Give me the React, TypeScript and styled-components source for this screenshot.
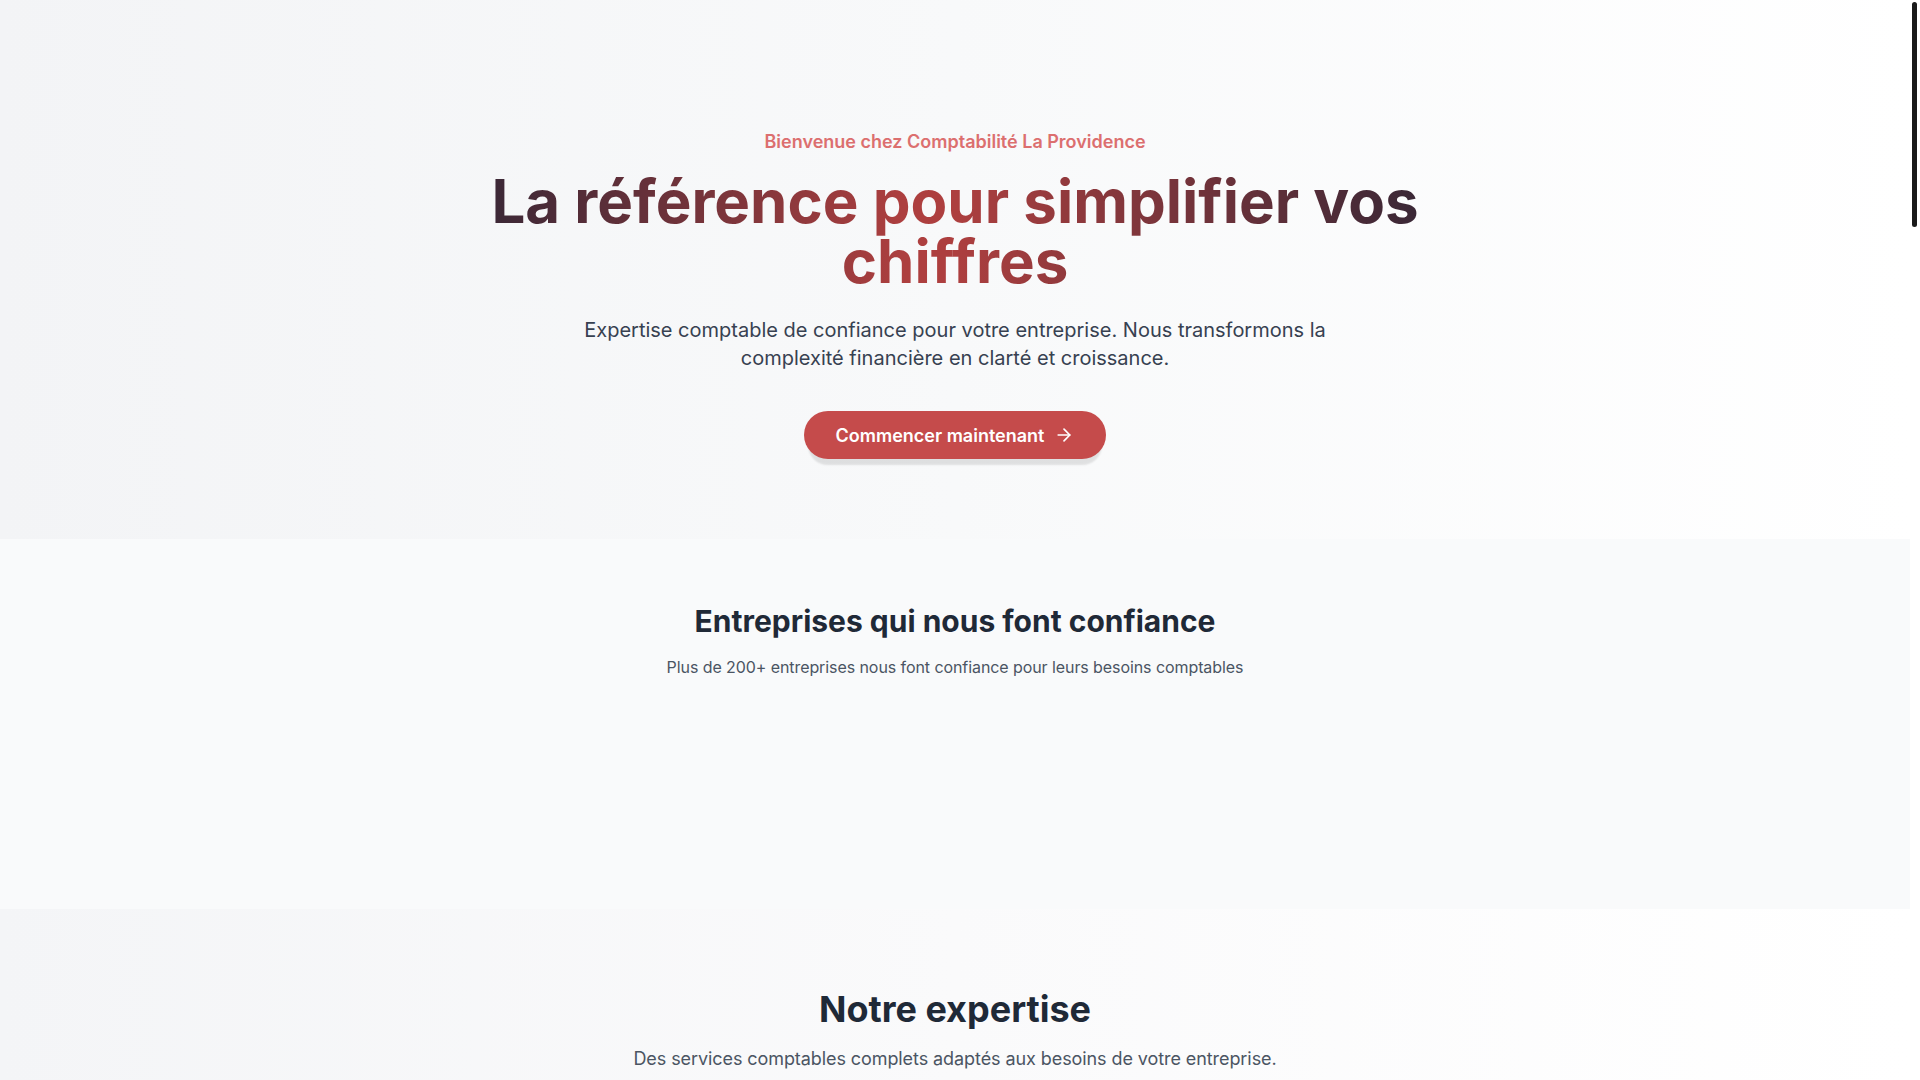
import React from 'react'
import styled, { createGlobalStyle } from 'styled-components'
import { ArrowRight, Calculator, FileText, PieChart, Briefcase, TrendingUp, ShieldCheck } from 'lucide-react'

const GlobalStyle = createGlobalStyle`
  html, body {
    margin: 0;
    padding: 0;
  }
  body {
    font-family: 'Inter', 'Noto Sans', sans-serif;
    color: #1f2937;
    background: #ffffff;
    -webkit-font-smoothing: antialiased;
    padding-right: 10px;
  }
  * {
    box-sizing: border-box;
  }
`

// drawn scrollbar, the headless window hides the native one
const ScrollTrack = styled.div`
  position: fixed;
  top: 0;
  right: 0;
  width: 10px;
  height: 100vh;
  background: #ffffff;
  z-index: 10;
`

const ScrollThumb = styled.div`
  margin: 2px 0 0 2px;
  width: 5px;
  height: 225px;
  border-radius: 5px;
  background: #1a1a1a;
`

const Hero = styled.section`
  display: flex;
  flex-direction: column;
  align-items: center;
  text-align: center;
  padding: 128px 24px 80px;
  background: linear-gradient(to right, #f3f4f6 0%, #f8f9fa 50%, #ffffff 100%);
`

const Eyebrow = styled.p`
  margin: 0;
  font-size: 18px;
  line-height: 28px;
  font-weight: 600;
  color: #dc6f6f;
`

const HeroTitle = styled.h1`
  margin: 15px 0 0;
  width: 100%;
  max-width: 1024px;
  font-size: 60px;
  line-height: 60px;
  font-weight: 700;
  background: linear-gradient(to right, #2e2535 0%, #ad3f3f 45%, #ad3f3f 50%, #2e2535 100%);
  -webkit-background-clip: text;
  background-clip: text;
  color: transparent;
`

const HeroText = styled.p`
  margin: 25px 0 0;
  max-width: 768px;
  font-size: 20px;
  line-height: 28px;
  color: #374151;
`

const PrimaryButton = styled.button<{ $top: number }>`
  margin-top: ${({ $top }) => $top}px;
  display: inline-flex;
  align-items: center;
  gap: 10px;
  height: 48px;
  padding: 0 32px;
  border: none;
  border-radius: 9999px;
  background: #c54b4b;
  color: #ffffff;
  font-family: inherit;
  font-size: 18px;
  font-weight: 600;
  cursor: pointer;
  box-shadow: 0 10px 2px -4px rgba(0, 0, 0, 0.1);
`

const Section = styled.section<{ $bg: string; $pad: string }>`
  display: flex;
  flex-direction: column;
  align-items: center;
  text-align: center;
  padding: ${({ $pad }) => $pad};
  background: ${({ $bg }) => $bg};
`

const SectionTitle = styled.h2<{ $size: number; $line: number }>`
  margin: 0;
  font-size: ${({ $size }) => $size}px;
  line-height: ${({ $line }) => $line}px;
  font-weight: 700;
  color: #1f2937;
`

const SectionText = styled.p<{ $size: number; $line: number }>`
  margin: 16px 0 0;
  font-size: ${({ $size }) => $size}px;
  line-height: ${({ $line }) => $line}px;
  letter-spacing: -0.08px;
  color: #4b5563;
`

const LogoStrip = styled.div`
  margin-top: 48px;
  width: 100%;
  max-width: 1280px;
  height: 118px;
`

const CardGrid = styled.div`
  margin-top: 64px;
  width: 100%;
  max-width: 1280px;
  display: grid;
  grid-template-columns: repeat(3, 1fr);
  gap: 32px;
  text-align: left;
`

const Card = styled.div`
  display: flex;
  flex-direction: column;
  gap: 16px;
  padding: 32px;
  border-radius: 16px;
  background: #ffffff;
  box-shadow: 0 4px 20px rgba(0, 0, 0, 0.06);
  min-height: 280px;
`

const CardIcon = styled.div`
  width: 56px;
  height: 56px;
  border-radius: 12px;
  display: flex;
  align-items: center;
  justify-content: center;
  background: #fdecec;
  color: #c54b4b;
`

const CardTitle = styled.h3`
  margin: 0;
  font-size: 20px;
  line-height: 28px;
  font-weight: 700;
  color: #1f2937;
`

const CardText = styled.p`
  margin: 0;
  font-size: 16px;
  line-height: 26px;
  color: #4b5563;
`

const StatsRow = styled.div`
  margin-top: 64px;
  width: 100%;
  max-width: 1280px;
  display: grid;
  grid-template-columns: repeat(4, 1fr);
  gap: 32px;
`

const Stat = styled.div`
  display: flex;
  flex-direction: column;
  gap: 8px;
  padding: 40px 24px;
  border-radius: 16px;
  background: #ffffff;
`

const StatValue = styled.span`
  font-size: 48px;
  line-height: 52px;
  font-weight: 700;
  color: #c54b4b;
`

const StatLabel = styled.span`
  font-size: 16px;
  color: #4b5563;
`

const Footer = styled.footer`
  display: flex;
  justify-content: center;
  padding: 80px 24px;
  min-height: 600px;
  background: #1f2937;
  color: #d1d5db;
  font-size: 14px;
`

const services = [
  { icon: Calculator, title: 'Tenue de livres', text: 'Une comptabilité rigoureuse et à jour pour suivre la santé de votre entreprise au quotidien.' },
  { icon: FileText, title: 'Déclarations fiscales', text: 'Préparation et production de vos déclarations dans le respect des échéances.' },
  { icon: PieChart, title: 'États financiers', text: 'Des rapports clairs pour comprendre vos résultats et prendre de meilleures décisions.' },
  { icon: Briefcase, title: 'Paie et salaires', text: 'Gestion complète de la paie de vos employés, simple et sans erreur.' },
  { icon: TrendingUp, title: 'Conseil stratégique', text: 'Un accompagnement personnalisé pour planifier la croissance de votre entreprise.' },
  { icon: ShieldCheck, title: 'Conformité', text: 'Restez en règle avec les exigences gouvernementales en toute sérénité.' },
]

const stats = [
  { value: '200+', label: 'Entreprises clientes' },
  { value: '15', label: "Années d'expérience" },
  { value: '98%', label: 'Clients satisfaits' },
  { value: '24h', label: 'Délai de réponse' },
]

const App: React.FC = () => {
  return (
    <>
      <GlobalStyle />
      <ScrollTrack>
        <ScrollThumb />
      </ScrollTrack>
      <Hero>
        <Eyebrow>Bienvenue chez Comptabilité La Providence</Eyebrow>
        <HeroTitle>La référence pour simplifier vos chiffres</HeroTitle>
        <HeroText>
          Expertise comptable de confiance pour votre entreprise. Nous transformons la complexité financière en
          clarté et croissance.
        </HeroText>
        <PrimaryButton $top={39}>
          Commencer maintenant
          <ArrowRight size={20} strokeWidth={2} />
        </PrimaryButton>
      </Hero>

      <Section $bg="#f9fafb" $pad="64px 24px">
        <SectionTitle $size={30} $line={36}>
          Entreprises qui nous font confiance
        </SectionTitle>
        <SectionText $size={16} $line={24}>
          Plus de 200+ entreprises nous font confiance pour leurs besoins comptables
        </SectionText>
        <LogoStrip />
      </Section>

      <Section $bg="linear-gradient(to right, #f4f5f7 0%, #fafafb 50%, #ffffff 100%)" $pad="80px 24px 120px">
        <SectionTitle $size={36} $line={40}>
          Notre expertise
        </SectionTitle>
        <SectionText $size={18} $line={28}>
          Des services comptables complets adaptés aux besoins de votre entreprise.
        </SectionText>
        <CardGrid>
          {services.map(({ icon: Icon, title, text }) => (
            <Card key={title}>
              <CardIcon>
                <Icon size={28} />
              </CardIcon>
              <CardTitle>{title}</CardTitle>
              <CardText>{text}</CardText>
            </Card>
          ))}
        </CardGrid>
      </Section>

      <Section $bg="#f9fafb" $pad="120px 24px">
        <SectionTitle $size={36} $line={40}>
          Pourquoi nous choisir
        </SectionTitle>
        <SectionText $size={18} $line={28}>
          Des chiffres qui parlent d'eux-mêmes.
        </SectionText>
        <StatsRow>
          {stats.map((s) => (
            <Stat key={s.label}>
              <StatValue>{s.value}</StatValue>
              <StatLabel>{s.label}</StatLabel>
            </Stat>
          ))}
        </StatsRow>
      </Section>

      <Section $bg="#ffffff" $pad="120px 24px 600px">
        <SectionTitle $size={36} $line={40}>
          Contactez-nous
        </SectionTitle>
        <SectionText $size={18} $line={28}>
          Parlons de vos besoins et trouvons ensemble la meilleure solution.
        </SectionText>
        <PrimaryButton $top={40}>
          Prendre rendez-vous
          <ArrowRight size={20} strokeWidth={2} />
        </PrimaryButton>
      </Section>

      <Footer>© 2025 Comptabilité La Providence. Tous droits réservés.</Footer>
    </>
  )
}

export default App
